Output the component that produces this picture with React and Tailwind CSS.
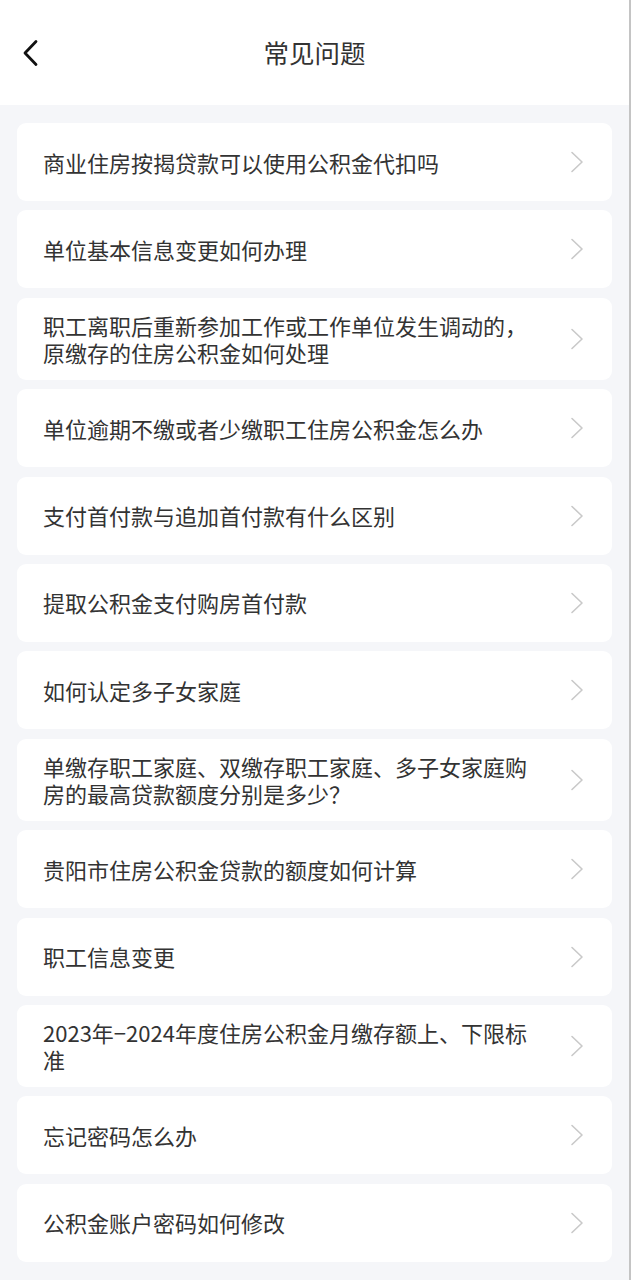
import React from 'react';

const questions = [
  '商业住房按揭贷款可以使用公积金代扣吗',
  '单位基本信息变更如何办理',
  '职工离职后重新参加工作或工作单位发生调动的，原缴存的住房公积金如何处理',
  '单位逾期不缴或者少缴职工住房公积金怎么办',
  '支付首付款与追加首付款有什么区别',
  '提取公积金支付购房首付款',
  '如何认定多子女家庭',
  '单缴存职工家庭、双缴存职工家庭、多子女家庭购房的最高贷款额度分别是多少？',
  '贵阳市住房公积金贷款的额度如何计算',
  '职工信息变更',
  '2023年−2024年度住房公积金月缴存额上、下限标准',
  '忘记密码怎么办',
  '公积金账户密码如何修改',
];

const Chevron = () => (
  <svg width="14" height="22" viewBox="0 0 14 22" fill="none" className="shrink-0">
    <polyline points="2,1.5 12,11 2,20.5" stroke="#c9c9c9" strokeWidth="1.6" strokeLinecap="round" strokeLinejoin="round" />
  </svg>
);

const App = () => {
  return (
    <div
      className="min-h-screen w-full border-r-2 border-[#c4c4c4] bg-[#f5f6f9]"
      style={{ fontFamily: '"Noto Sans CJK SC", "Noto Sans", sans-serif' }}
    >
      <div className="relative flex h-[105px] items-center justify-center bg-white">
        <button className="absolute left-[20px] top-[38px] p-0">
          <svg width="20" height="30" viewBox="0 0 20 30" fill="none">
            <polyline points="16,3.5 5,15 16,26.5" stroke="#111" strokeWidth="2.8" strokeLinecap="round" strokeLinejoin="round" />
          </svg>
        </button>
        <h1 className="text-[25.5px] font-normal leading-none text-[#333] -translate-y-[1px]">常见问题</h1>
      </div>

      <div className="flex flex-col gap-[9.4px] px-[17px] pt-[18px] pb-[18px]">
        {questions.map((q) => (
          <div
            key={q}
            className="flex min-h-[78px] items-center justify-between rounded-[9px] bg-white py-[14px] pl-[26px] pr-[28px]"
          >
            <span className="max-w-[500px] text-[22px] leading-[27px] text-[#333]">{q}</span>
            <Chevron />
          </div>
        ))}
      </div>
    </div>
  );
};

export default App;
